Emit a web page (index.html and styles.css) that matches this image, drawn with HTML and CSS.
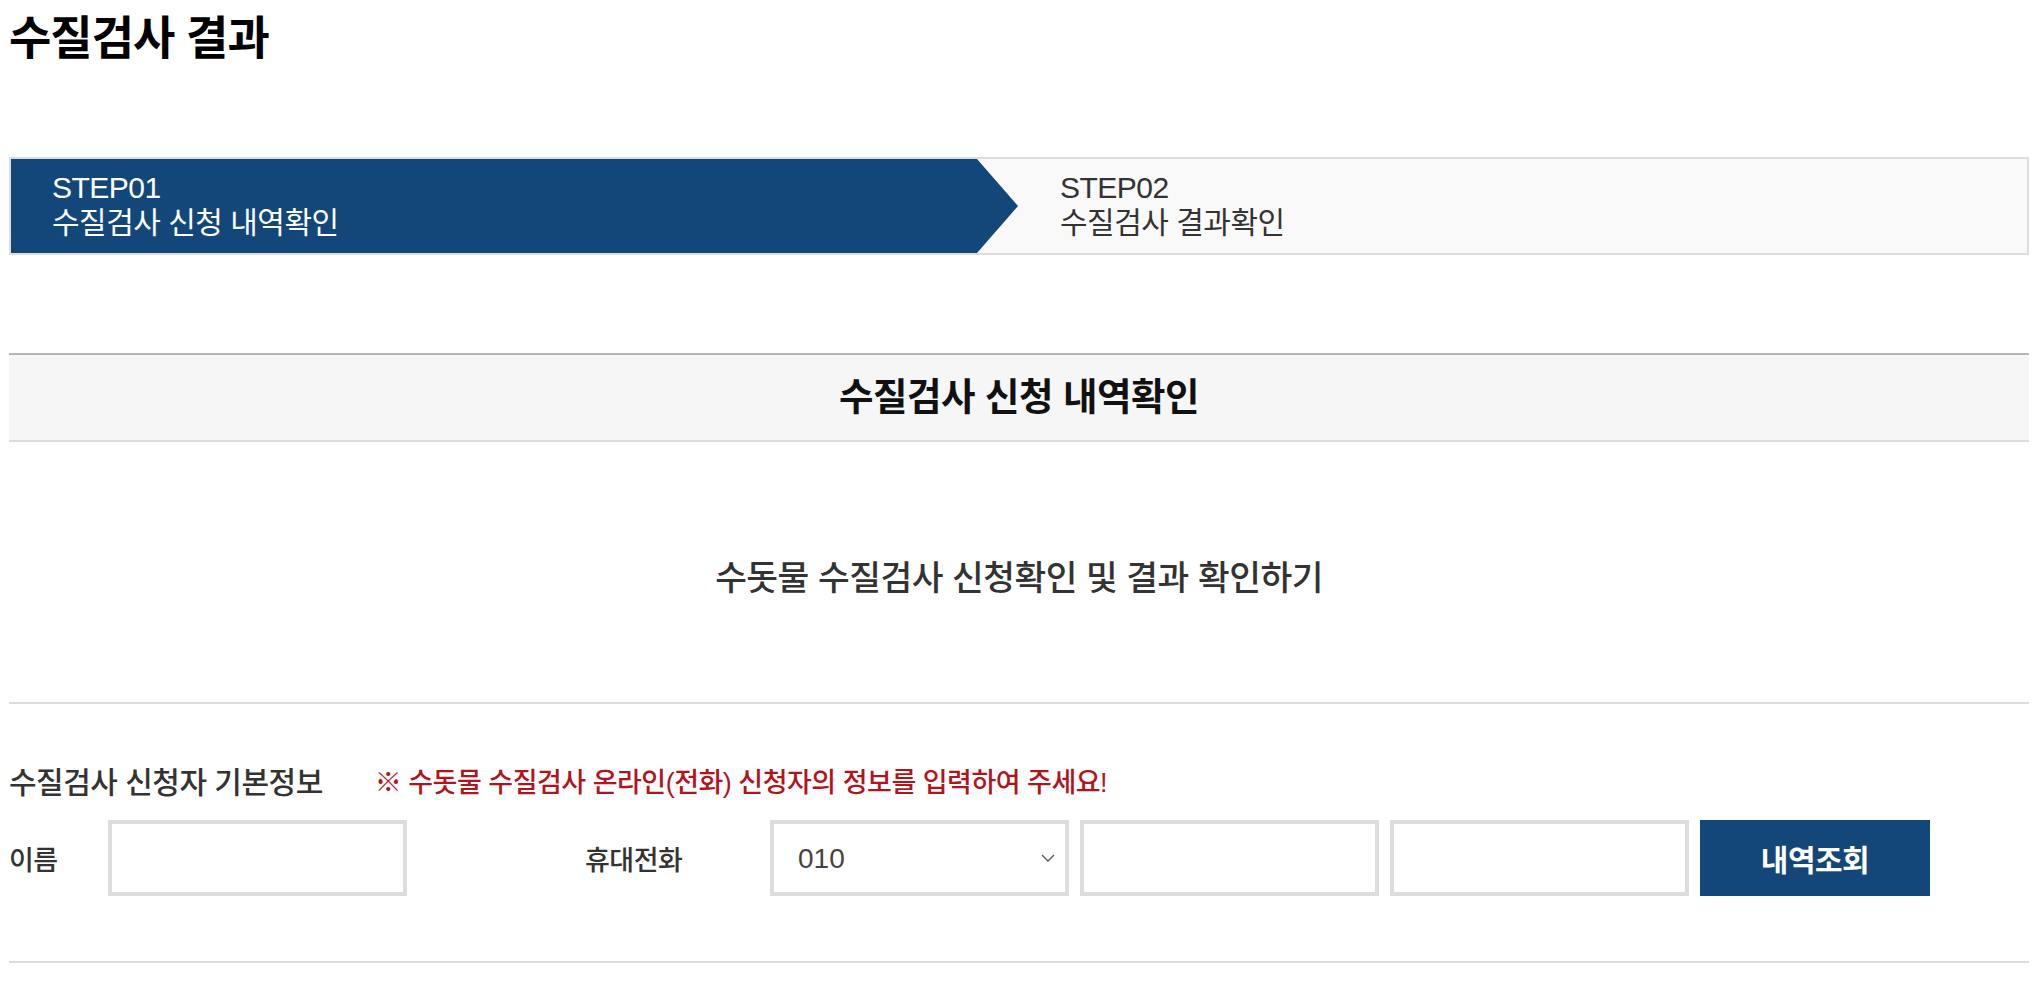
FILE: index.html
```html
<!DOCTYPE html>
<html lang="ko">
<head>
	<meta charset="UTF-8" />
	<meta name="viewport" content="width=device-width, initial-scale=1.0" />
	<title>수질검사 결과</title>
	<link rel="stylesheet" href="styles.css">
</head>
<body>
	<div class="wrap">
		<h1 class="page-title">수질검사 결과</h1>

		<div class="steps">
			<div class="step on">
				<span class="step-no">STEP01</span>
				<span class="step-name">수질검사 신청 내역확인</span>
			</div>
			<div class="step">
				<span class="step-no">STEP02</span>
				<span class="step-name">수질검사 결과확인</span>
			</div>
		</div>

		<h2 class="sec-title">수질검사 신청 내역확인</h2>

		<p class="sec-desc">수돗물 수질검사 신청확인 및 결과 확인하기</p>

		<div class="form-box">
			<div class="form-head">
				<h3>수질검사 신청자 기본정보</h3>
				<span class="notice">※ 수돗물 수질검사 온라인(전화) 신청자의 정보를 입력하여 주세요!</span>
			</div>
			<div class="form-row">
				<label class="lbl lbl-name" for="userName">이름</label>
				<input type="text" id="userName" class="inp">
				<label class="lbl lbl-tel" for="tel1">휴대전화</label>
				<div class="sel-wrap">
					<select id="tel1" class="inp sel">
						<option>010</option>
						<option>011</option>
						<option>016</option>
						<option>017</option>
						<option>019</option>
					</select>
					<svg class="sel-arrow" width="14" height="8" viewBox="0 0 14 8"><path d="M1 1l6 6 6-6" fill="none" stroke="#555" stroke-width="1.3"/></svg>
				</div>
				<input type="text" class="inp" maxlength="4">
				<input type="text" class="inp" maxlength="4">
				<button type="button" class="btn-search">내역조회</button>
			</div>
		</div>
	</div>
</body>
</html>
```

FILE: styles.css
```css
body {
	margin: 0;
	background: #fff;
	color: #333;
	font-family: "Liberation Sans", "Noto Sans CJK KR", sans-serif;
}

.wrap {
	width: 2020px;
	margin-left: 9px;
}

.page-title {
	margin: 0;
	padding-top: 8px;
	height: 149px;
	font-size: 46px;
	line-height: 60px;
	font-weight: 700;
	color: #000;
	letter-spacing: -1px;
}

/* 단계 표시 */
.steps {
	display: flex;
	height: 94px;
	border: 2px solid #ddd;
	background: #f9f9f9;
}

.step {
	display: flex;
	flex-direction: column;
	justify-content: center;
	flex: 1;
	padding-left: 83px;
	color: #333;
}

.step.on {
	position: relative;
	flex: 0 0 966px;
	padding-left: 41px;
	box-sizing: border-box;
	background: #13477a;
	color: #fff;
}

.step.on::after {
	content: "";
	position: absolute;
	top: 0;
	right: -41px;
	border-top: 47px solid transparent;
	border-bottom: 47px solid transparent;
	border-left: 41px solid #13477a;
}

.step-no,
.step-name {
	font-size: 30px;
	line-height: 35px;
	letter-spacing: -0.5px;
}

.step-no {
	margin-top: -2px;
}

/* 섹션 */
.sec-title {
	margin: 98px 0 0;
	height: 85px;
	border-top: 2px solid #b5b5b5;
	border-bottom: 2px solid #dcdcdc;
	background: #f6f6f6;
	text-align: center;
	font-size: 37.5px;
	line-height: 85px;
	font-weight: 700;
	color: #111;
	letter-spacing: -0.5px;
}

.sec-desc {
	margin: 0;
	padding: 116px 0 104px;
	text-align: center;
	font-size: 34.5px;
	line-height: 40px;
	font-weight: 500;
	color: #333;
	letter-spacing: -0.5px;
	border-bottom: 2px solid #ddd;
}

.form-box {
	padding: 58px 0 65px;
	border-bottom: 2px solid #ddd;
}

.form-head {
	display: flex;
	align-items: center;
	gap: 52px;
	height: 36px;
}

.form-head h3 {
	margin: 0;
	font-size: 30px;
	font-weight: 500;
	color: #333;
	letter-spacing: -0.5px;
}

.notice {
	font-size: 27px;
	font-weight: 500;
	color: #b3141c;
	letter-spacing: -0.5px;
}

.form-row {
	display: flex;
	align-items: center;
	gap: 11px;
	margin-top: 22px;
}

.lbl {
	font-size: 27px;
	font-weight: 500;
	color: #333;
	letter-spacing: -0.5px;
}

.lbl-name {
	width: 88px;
}

.lbl-tel {
	width: 174px;
	margin-left: 167px;
}

.inp {
	width: 299px;
	height: 76px;
	box-sizing: border-box;
	border: 4px solid #ddd;
	background: #fff;
	font-family: inherit;
	font-size: 28px;
	color: #444;
	outline: none;
}

.sel-wrap {
	position: relative;
}

.sel {
	padding-left: 24px;
	appearance: none;
	-webkit-appearance: none;
}

.sel-arrow {
	position: absolute;
	top: 34px;
	right: 14px;
}

.btn-search {
	width: 230px;
	height: 76px;
	border: none;
	background: #13477a;
	color: #fff;
	font-family: inherit;
	font-size: 30px;
	font-weight: 700;
	letter-spacing: -0.5px;
	cursor: pointer;
}
```
